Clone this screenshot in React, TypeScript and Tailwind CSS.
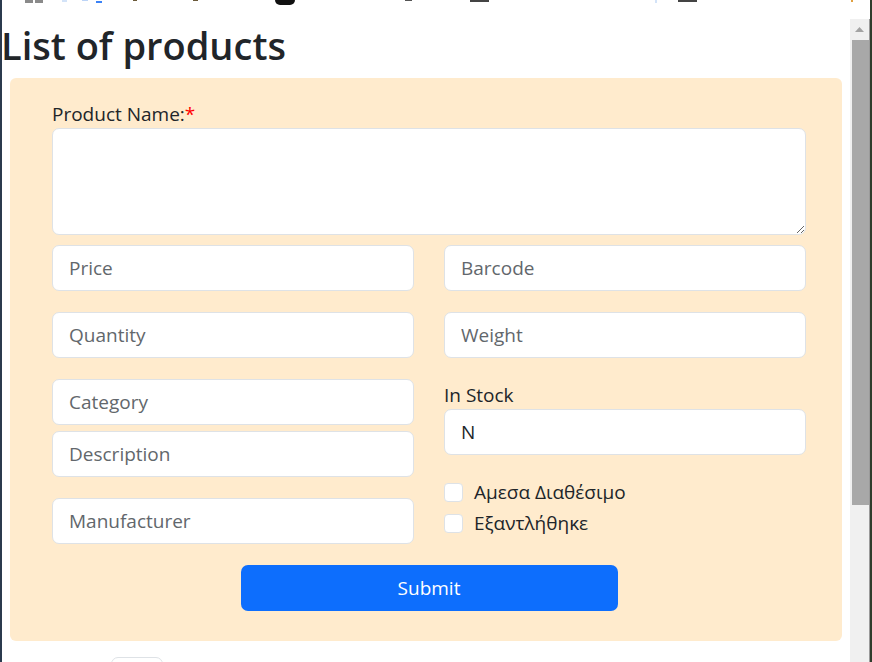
// Product form page, shown inside a browser window at 125% zoom

const chromeBits = [
    "ml-[23px] h-[3px] w-[8px] bg-[#8a8a8a]",
    "ml-[2px] h-[3px] w-[8px] bg-[#8a8a8a]",
    "ml-[19px] h-[2px] w-[5px] bg-[#d3e3f8]",
    "ml-[15px] h-[1px] w-[6px] bg-[#bcd4f7]",
    "ml-[8px] mt-[1px] h-[2px] w-[6px] bg-[#3b82f6]",
    "ml-[31px] h-[1px] w-[4px] bg-[#6b5a3a]",
    "ml-[56px] h-[1px] w-[5px] bg-[#6b5a3a]",
    "ml-[77px] h-[5px] w-[20px] rounded-b-full bg-[#111111]",
    "ml-[110px] h-[1px] w-[7px] bg-[#555555]",
    "ml-[58px] h-[2px] w-[19px] bg-[#444444]",
    "ml-[166px] h-[3px] w-[2px] bg-[#d3e3f8]",
    "ml-[21px] h-[2px] w-[19px] bg-[#444444]",
    "ml-[154px] h-[2px] w-[2px] bg-[#e0a040]",
];

export default function App() {
    const inputClasses = "block h-[46px] w-full rounded-[7px] border border-[#dee2e6] bg-white px-[16px] text-[19px] text-[#212529] placeholder:text-[#62676c] outline-none";
    const checkClasses = "h-[19px] w-[19px] shrink-0 appearance-none rounded-[4px] border border-[#dee2e6] bg-white";

    return (
        <div className="flex h-[662px] w-[872px] overflow-hidden bg-white font-['Open_Sans',sans-serif] text-[#212529]">
            <div className="w-[2px] shrink-0 bg-[#2b3a4e]" />

            <div className="flex min-w-0 flex-1 flex-col">
                {/* cut-off bookmarks bar */}
                <div className="flex h-[19px] shrink-0 items-start">
                    {chromeBits.map((c, i) => (
                        <div key={i} className={"shrink-0 " + c} />
                    ))}
                </div>

                <div className="flex min-h-0 flex-1">
                    <main className="min-w-0 flex-1">
                        <h1 className="ml-[-1px] mt-[3px] text-[38px] font-semibold leading-[47px]">List of products</h1>

                        <form className="mx-[8px] mt-[9px] rounded-[6px] bg-[#ffebcd] pb-[30px] pl-[42px] pr-[36px] pt-[23px]">
                            <label className="block text-[19px] leading-[26px]">
                                Product Name:<span className="text-[#ff0000]">*</span>
                            </label>
                            <textarea className="mt-[1px] block h-[107px] w-full rounded-[7px] border border-[#dee2e6] bg-white px-[16px] py-[8px] text-[19px] outline-none" />

                            <div className="mt-[10px] grid grid-cols-2 gap-x-[30px] gap-y-[21px]">
                                <input className={inputClasses} placeholder="Price" />
                                <input className={inputClasses} placeholder="Barcode" />
                                <input className={inputClasses} placeholder="Quantity" />
                                <input className={inputClasses} placeholder="Weight" />

                                <div className="flex flex-col">
                                    <input className={inputClasses} placeholder="Category" />
                                    <input className={inputClasses + " mt-[6px]"} placeholder="Description" />
                                    <input className={inputClasses + " mt-[21px]"} placeholder="Manufacturer" />
                                </div>

                                <div className="flex flex-col">
                                    <label className="mt-[3px] block text-[19px] leading-[26px]">In Stock</label>
                                    <input className={inputClasses + " mt-[1px]"} defaultValue="N" />
                                    <label className="mt-[22px] flex h-[31px] items-center gap-[11px] text-[19px]">
                                        <input type="checkbox" className={checkClasses} />
                                        Αμεσα Διαθέσιμο
                                    </label>
                                    <label className="flex h-[31px] items-center gap-[11px] text-[19px]">
                                        <input type="checkbox" className={checkClasses} />
                                        Εξαντλήθηκε
                                    </label>
                                </div>
                            </div>

                            <div className="mt-[21px] flex justify-center">
                                <button
                                    type="button"
                                    className="h-[46px] w-[377px] rounded-[7px] bg-[#0d6efd] text-[19px] text-white"
                                >
                                    Submit
                                </button>
                            </div>
                        </form>

                        <div className="ml-[109px] mt-[16px] h-[30px] w-[52px] rounded-[7px] border border-[#dee2e6]" />
                    </main>

                    {/* scrollbar */}
                    <div className="flex w-[19px] shrink-0 flex-col bg-[#f0f0f0]">
                        <div className="flex h-[21px] items-center justify-center">
                            <svg width="9" height="5" viewBox="0 0 9 5">
                                <path d="M4.5 0 L9 5 L0 5 Z" fill="#a3a3a3" />
                            </svg>
                        </div>
                        <div className="ml-[2px] h-[465px] w-[17px] bg-[#a8a8a8]" />
                    </div>
                    <div className="w-[1px] shrink-0 bg-[#9a9a9a]" />
                </div>
            </div>

            <div className="w-[2px] shrink-0 bg-[#2f3d2c]" />
        </div>
    );
}
